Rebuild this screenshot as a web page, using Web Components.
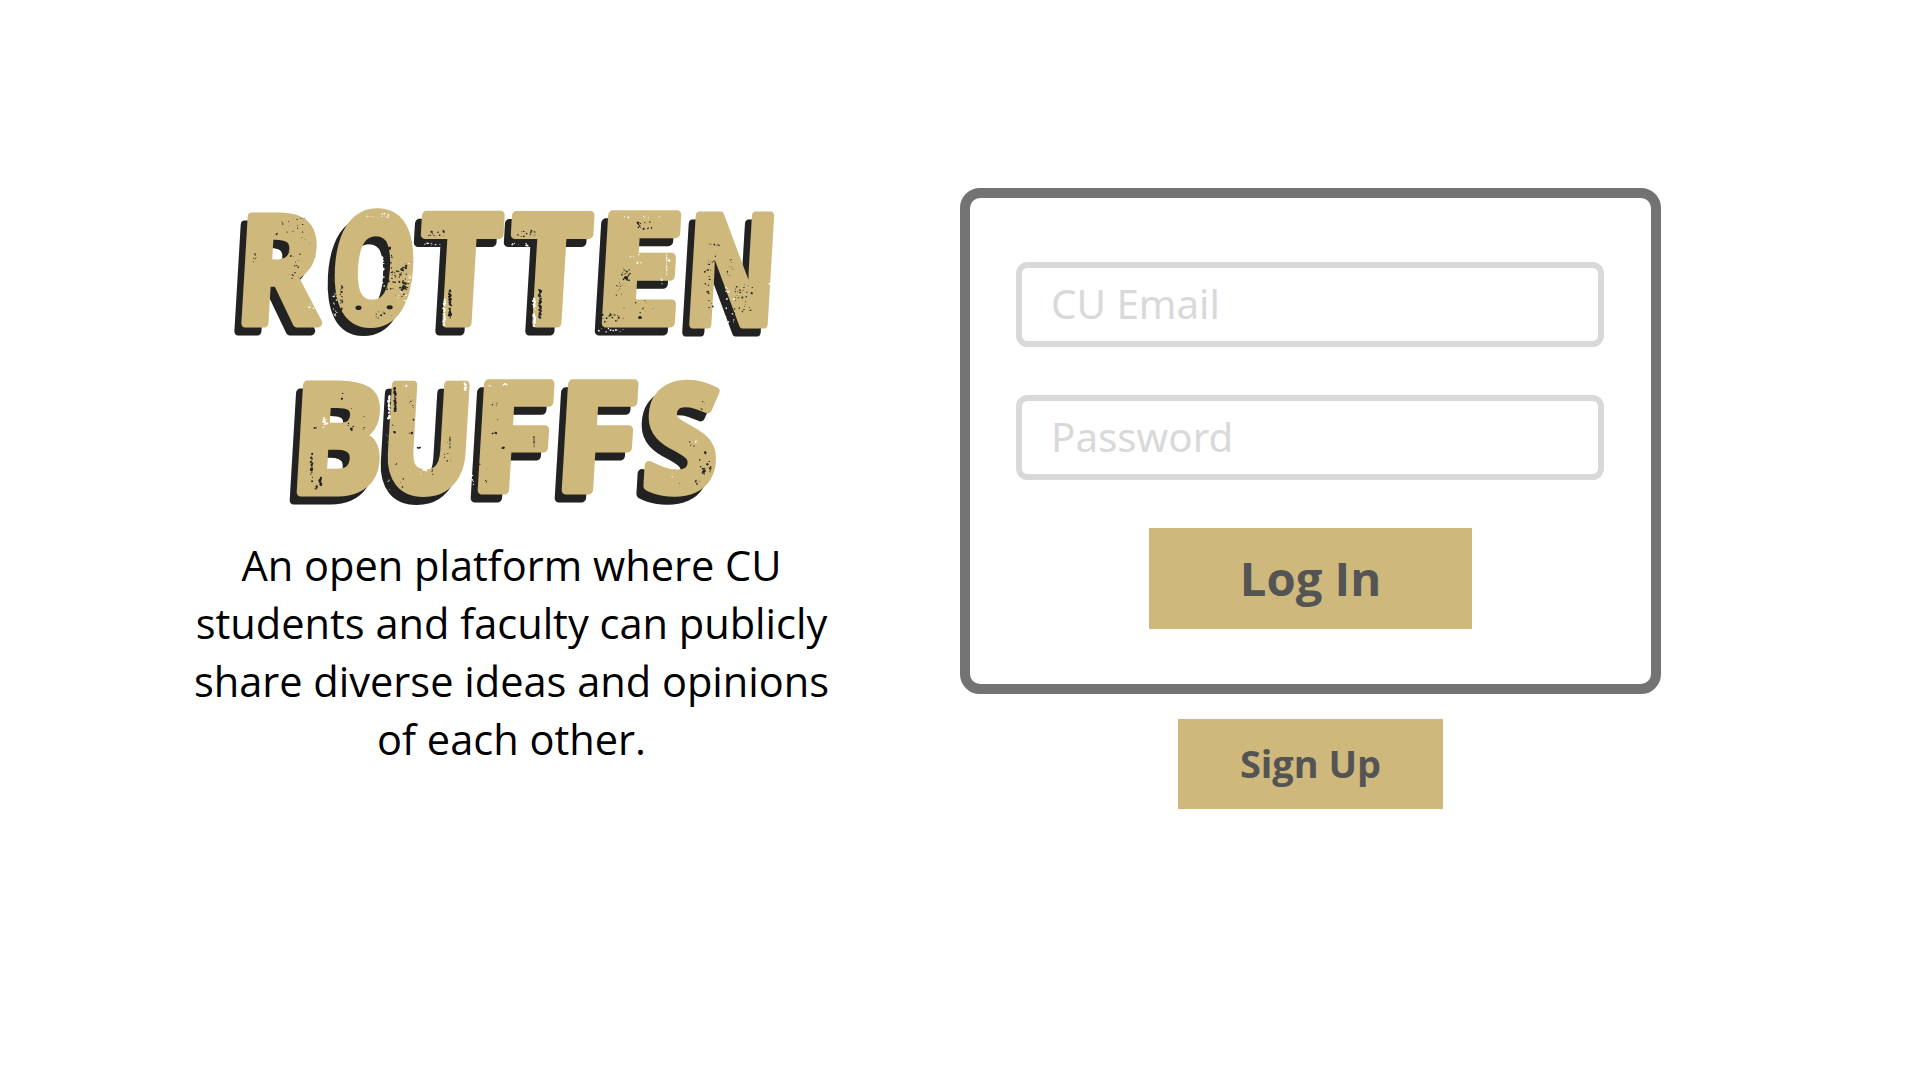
<!DOCTYPE html>
<html lang="en">
<head>
<meta charset="utf-8">
<title>Rotten Buffs</title>
<style>
html,body{margin:0;background:#fff}
body{width:1920px;height:1080px;overflow:hidden;font-family:"Open Sans","Noto Sans",sans-serif;color:#000}
</style>
</head>
<body>
<login-page>
  <brand-title slot="intro"></brand-title>
  <tag-line slot="intro">An open platform where CU<br>students and faculty can publicly<br>share diverse ideas and opinions<br>of each other.</tag-line>
  <login-card slot="access">
    <text-field>CU Email</text-field>
    <text-field>Password</text-field>
    <gold-button slot="action">Log In</gold-button>
  </login-card>
  <gold-button slot="access" small>Sign Up</gold-button>
</login-page>
<script>
const make=(name,html,extra)=>customElements.define(name,class extends HTMLElement{
  constructor(){super();this.attachShadow({mode:'open'}).innerHTML=html;}
  connectedCallback(){if(extra&&!this.ready){this.ready=true;extra(this.shadowRoot);}}
});

make('login-page',`<style>
:host{display:flex;box-sizing:border-box;height:1080px;padding-top:187.6px;align-items:flex-start}
.intro{display:flex;flex-direction:column;align-items:center;width:1023px;flex:none;margin-right:-63px}
.access{display:flex;flex-direction:column;align-items:center;width:701px;gap:25px}
</style><div class="intro"><slot name="intro"></slot></div><div class="access"><slot name="access"></slot></div>`);

make('tag-line',`<style>
:host{display:block;text-align:center;font-size:41.55px;line-height:58px;white-space:nowrap;color:#000}
</style><slot></slot>`);

make('login-card',`<style>
:host{display:flex;flex-direction:column;align-items:center;box-sizing:border-box;width:701px;height:506px;border:10px solid #737373;border-radius:20px;padding-top:64.6px}
.fields{display:flex;flex-direction:column;gap:48.7px;margin-bottom:48.4px;margin-left:-1px}
</style><div class="fields"><slot></slot></div><slot name="action"></slot>`);

make('text-field',`<style>
:host{display:flex;align-items:center;box-sizing:border-box;width:588px;height:84.4px;border:6px solid #d9d9d9;border-radius:11.5px;padding-left:29px;color:#d9d9d9;font:400 40.3px/1.3 "Noto Sans","Open Sans",sans-serif}
</style><span><slot></slot></span>`);

make('gold-button',`<style>
:host{display:flex;align-items:center;justify-content:center;width:323.7px;height:100.6px;background:#cfb87c;color:#545454;font-weight:700;font-size:47.2px;line-height:1;white-space:nowrap}
:host([small]){width:264.5px;height:90.7px;font-size:37.9px}
</style><slot></slot>`);

/* Each glyph: character, left, right, top, bottom of its ink, then the share of the lean
   that widens the box and the share that pulls the foot to the left. */
const WORDS=[
 {y:0,g:[['R',8,92.5,22,139.4,.2,0],['O',101,182.5,19.8,140.3,.3,-.35],['T',189,273.2,22.3,139.9,.2,-.8],['T',279,363,22.3,139.9,.2,-.8],['E',368,451,21.8,140,1,0],['N',456,543.3,22.3,140.2,1,0]]},
 {y:170,g:[['B',63,149.6,21.4,138.4,.6,0],['U',154.8,239,21.5,138.5,.7,-.3],['F',244,323,20.5,138,1,0],['F',328,407,20.5,138,1,0],['S',411.5,488,20.5,138.5,.5,-.2]]}
];
make('brand-title',`<style>
:host{display:block;position:relative;width:560px;height:348.7px;margin-left:1px}
svg{display:block;width:560px;height:348px;overflow:visible}
.word{filter:drop-shadow(-6.6px 8.8px 0 #222)}
text{font:700 100px "Open Sans",sans-serif;fill:#cfb87c;stroke:#cfb87c;stroke-width:6px;stroke-linejoin:round}
</style><svg viewBox="0 0 560 348" role="img" aria-label="Rotten Buffs"></svg>`,root=>{
  const ctx=document.createElement('canvas').getContext('2d');
  ctx.font='700 100px "Open Sans"';
  const K=Math.tan(3.4*Math.PI/180),P=3;
  let out='';
  WORDS.forEach(w=>{
    out+=`<g class="word">`;
    w.g.forEach(([c,l,r,t,b,wide,pull])=>{
      const m=ctx.measureText(c);
      const x0=-m.actualBoundingBoxLeft-P,x1=m.actualBoundingBoxRight+P;
      const y0=-m.actualBoundingBoxAscent-P,y1=m.actualBoundingBoxDescent+P;
      const H=b-t,sx=(r-l-H*K*wide)/(x1-x0),sy=H/(y1-y0),k=K*sy;
      out+=`<text transform="matrix(${sx} 0 ${-k} ${sy} ${l-x0*sx+k*y1+H*K*pull} ${w.y+t-y0*sy})">${c}</text>`;
    });
    out+='</g>';
  });

  /* Worn print: seeded clusters of specks, one group per part of the title.
     Lists are in thirds of a pixel: cx, cy, half width, half height, count, size, colour. */
  const D='#222',W='#fff',G=[
   [-12,2.5,[
    [190,100,10,10,4,2.5,D],[230,105,30,22,12,2.5,D],[170,128,4,4,2,3,D],[225,225,18,42,15,2.8,D],[106,203,9,16,7,2.5,D],[255,150,18,20,4,2,D],[295,178,1.5,26,24,2,W],[278,350,10,12,5,4,W],
    [447,78,14,4,6,2,W],[497,75,13,6,12,3,W],[508,230,8,70,14,3.5,D],[527,275,26,45,26,3.5,D],[553,260,12,48,28,4,D],[488,245,5,45,22,4,W],[570,255,5,40,9,3,W],[547,325,20,22,7,3,W],[364,320,4,38,22,3,D],[345,350,6,45,18,3.5,W],[490,375,30,12,8,3.5,D],
    [650,128,28,10,14,3.5,D],[630,162,30,4,9,3,W],[690,340,3,42,60,4,D],[673,365,3,42,50,3.6,W],[767,350,2,50,22,4,W]]],
   [268,2.5,[
    [80,128,28,10,14,3.5,D],[60,162,30,4,9,3,W],[120,340,3,42,60,4,D],[103,365,3,42,50,3.6,W],[197,350,2,50,22,4,W],
    [432,105,24,11,13,3.5,D],[425,79,60,3,12,2.5,W],[378,250,14,20,22,3.6,D],[362,295,14,20,10,2.5,D],[410,205,22,14,6,3,W],[500,222,1,34,50,1.8,W],[483,272,3,12,5,3,W],[345,382,40,12,16,3.6,D],[335,418,42,6,10,3.5,W],[415,350,45,22,10,2.5,D],
    [643,163,15,3,12,2.5,D],[622,260,11,50,16,3,D],[640,205,16,12,5,2.5,D],[632,345,8,16,4,3,D],[690,230,10,25,11,2.5,D],[730,325,28,44,32,3.4,D],[690,345,14,55,16,3,W],[812,280,6,1.2,14,2,W]]],
   [48,177.5,[
    [187,95,4,12,5,3.5,D],[210,185,10,10,7,4,D],[105,187,8,3,4,3,D],[136,170,6,20,12,4,W],[258,190,10,4,3,3,D],[95,310,3,48,24,3.6,D],[121,350,2.5,14,16,4,D],[110,365,4,6,4,4,D],[230,130,30,50,4,2.5,D],
    [345,102,2.5,36,48,3.6,D],[327,125,2.5,36,48,3.6,W],[341,190,4,14,4,4,D],[323,210,3,20,3,3,W],[556,66,2.5,13,28,3.6,W],[435,314,6,2,10,3,W],[456,320,3,7,4,2.5,D],[508,240,12,50,5,2.5,D],[422,325,2,2,2,3,W]]],
   ...[184,268].map(x=>[x,177.5,[
    [14,56,8,3,10,2.6,W],[-30,60,3,3,4,3,W],[-8,130,4,34,4,3,D],[-20,110,6,20,3,2.2,D],[-17,203,7,2.5,6,3,D],[-60,296,8,1,3,2.4,D],[-43,355,5,18,3,3,D],[-82,345,5,28,4,2.5,W],[9,247,4,1.5,5,3.6,D],[102,230,.5,18,40,1.5,D],[86,273,1.5,7,4,2.4,D]]]),
   [334.7,177.5,[
    [406,115,8,20,4,2.5,D],[388,228,5,5,5,2.6,W],[375,232,8,12,3,2.6,D],[415,290,18,36,9,4,D],[412,317,5,9,12,4,D],[429,312,3,12,6,4,D],[392,350,8,7,6,2.8,D],[320,335,8,14,2,2.6,W],[336,355,2,2,1,4,D]]]
  ];
  const singles=[[126.5,119.7,3,2.3,D],[157.7,119.2,3,2,D],[157,60.5,2,1.6,D],[408,129.5,2,1.6,D],[394,89.7,2,1.6,D],[437,72.5,1.3,1.2,W]];
  let seed=11;const rnd=()=>(seed=(seed*16807)%2147483647)/2147483647;
  const dot=(x,y,a,b,c)=>out+=`<ellipse cx="${x.toFixed(1)}" cy="${y.toFixed(1)}" rx="${a.toFixed(2)}" ry="${b.toFixed(2)}" fill="${c}"/>`;
  G.forEach(([ox,oy,list])=>list.forEach(([x,y,w,h,n,s,c])=>{
    for(let i=0;i<n;i++){const a=s/3*(.35+rnd()*.6);dot(ox+(x+(rnd()*2-1)*w)/3,oy+(y+(rnd()*2-1)*h)/3,a,a*(.6+rnd()*.6),c);}
  }));
  singles.forEach(a=>dot(...a));
  root.querySelector('svg').innerHTML=out;
});
</script>
</body>
</html>
